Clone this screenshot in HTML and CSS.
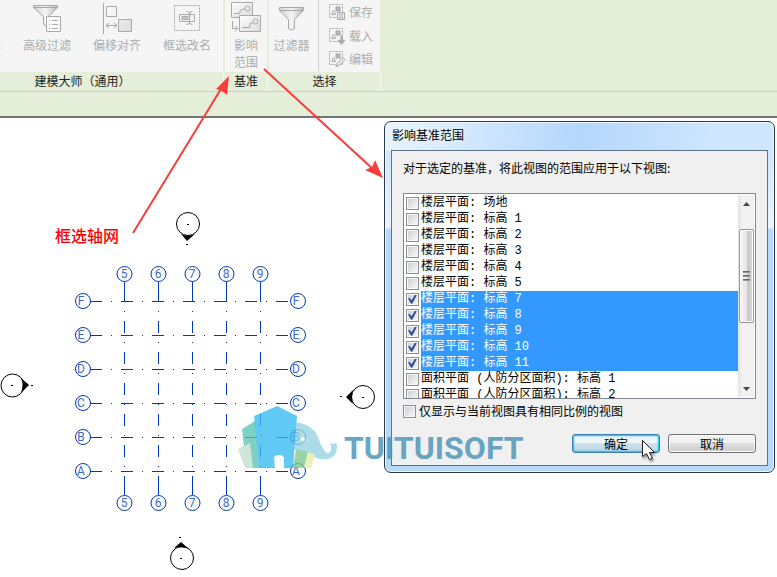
FILE: index.html
```html
<!DOCTYPE html>
<html lang="zh-CN">
<head>
<meta charset="utf-8">
<title>影响基准范围</title>
<link rel="stylesheet" href="styles.css">
</head>
<body>
<svg class="defs" aria-hidden="true">
  <defs>
    <linearGradient id="metal" x1="0" x2="1"><stop offset="0" stop-color="#d2d2d2"/><stop offset=".5" stop-color="#f4f4f4"/><stop offset="1" stop-color="#bfbfbf"/></linearGradient>
    <linearGradient id="sheet" x1="0" y1="0" x2="1" y2="1"><stop offset="0" stop-color="#fdfdfd"/><stop offset="1" stop-color="#dcdcdc"/></linearGradient>
    <g id="pick"><path d="M1.5 1.5h13v13h-13z" stroke-dasharray="2 1"/><path d="M3.5 11.500l2-4 2 4z"/><path d="M8.500 4.500h3v3h-3z" stroke-width="2"/></g>
  </defs>
</svg>
<header class="ribbon">
  <section class="panel panel-tools">
    <div class="tools">
      <button class="tool tool-cut">准</button>
      <button class="tool">
        <svg class="icon" viewBox="0 0 32 32"><path d="M2.500 3.500h24v2l-9 9v11l-5-3v-8l-10-9z" fill="url(#metal)"/><path d="M2.500 5.500h24"/><path d="M15.500 14.500h14v15h-14z" fill="#fcfcfc"/><path d="M21 18.500h6M21 22.500h6M21 26.500h6M18 18.500h1M18 22.500h1M18 26.500h1"/></svg>
        <span>高级过滤</span>
      </button>
      <button class="tool">
        <svg class="icon" viewBox="0 0 32 32"><path d="M2.500 1v31M5 23.500h11M8 21l-3 2.500 3 2.500M13 21l3 2.500-3 2.500"/><path d="M5.500 4.500h10v10h-10zM17.500 17.500h13v12h-13z" fill="url(#sheet)"/></svg>
        <span>偏移对齐</span>
      </button>
      <button class="tool">
        <svg class="icon" viewBox="0 0 32 32"><path d="M3.500 3.500h25v25h-25z" stroke-dasharray="2 1"/><path d="M8.500 12.500h15v7h-15z" fill="#f2f2f2"/><path d="M11 14.500h6v3h-6z" fill="#c8c8c8"/><path d="M18.500 10v12M15.500 9.500q3 0 3 2 0-2 3-2M15.500 22.500q3 0 3-2 0 2 3 2"/></svg>
        <span>框选改名</span>
      </button>
    </div>
    <h2>建模大师（通用）</h2>
  </section>
  <section class="panel panel-datum">
    <div class="tools">
      <button class="tool">
        <svg class="icon" viewBox="0 0 32 32"><path d="M1.500.5h21v15h-21z" fill="url(#sheet)"/><path d="M4 11.500h6v-3l5-2"/><circle cx="17.500" cy="6.500" r="2.500"/><path d="M2.500 19v7.500h5M5 23.500l3 3-3 3"/><path d="M9.500 13.500h21v16h-21z" fill="url(#sheet)"/><path d="M12 25.500h8v-4l3-1"/><circle cx="25.500" cy="19.500" r="2.500"/></svg>
        <span>影响<br>范围</span>
      </button>
    </div>
    <h2>基准</h2>
  </section>
  <section class="panel panel-select">
    <div class="tools">
      <button class="tool">
        <svg class="icon" viewBox="0 0 32 32"><path d="M3.500 5.500h24v3l-9 9v9q-3 3-6 0v-9l-9-9z" fill="url(#metal)"/><path d="M3.500 8.500h24"/></svg>
        <span>过滤器</span>
      </button>
      <div class="stack">
        <button><svg viewBox="0 0 18 18"><use href="#pick"/><path d="M9.500 9.500h7v7h-7z" fill="#eee"/><path d="M11.500 10v2h3v-2M11.500 16v-2h3v2"/></svg>保存</button>
        <button><svg viewBox="0 0 18 18"><use href="#pick"/><path d="M13.500 8.500v8M10.500 13l3 3.500 3-3.500" stroke="#aaa" stroke-width="2"/></svg>载入</button>
        <button><svg viewBox="0 0 18 18"><use href="#pick"/><path d="M8 16.500l1-3 6-6 2 2-6 6z" fill="#eee"/></svg>编辑</button>
      </div>
    </div>
    <h2>选择</h2>
  </section>
</header>
<div class="options-bar"></div>

<svg class="drawing" width="777" height="577" viewBox="0 0 777 577" role="img" aria-label="轴网平面图">
  <g class="grid" shape-rendering="crispEdges">
    <path class="axis" d="M90 301.500H290M90 335.500H290M90 369.500H290M90 403.500H290M90 437.500H290M90 471.500H290"/>
    <path class="axis" d="M124.500 290V488M158.500 290V488M192.500 290V488M226.500 290V488M260.500 290V488"/>
    <path d="M124.500 282v8m0 198v7M158.500 282v8m0 198v7M192.500 282v8m0 198v7M226.500 282v8m0 198v7M260.500 282v8m0 198v7"/>
  </g>
  <g class="grid">
    <g id="heads"><circle cx="124.500" cy="274" r="7.500"/><circle cx="158.500" cy="274" r="7.500"/><circle cx="192.500" cy="274" r="7.500"/><circle cx="226.500" cy="274" r="7.500"/><circle cx="260.500" cy="274" r="7.500"/></g>
    <use href="#heads" y="229"/>
    <g id="sides"><circle cx="83" cy="301" r="7.500"/><circle cx="83" cy="335" r="7.500"/><circle cx="83" cy="369" r="7.500"/><circle cx="83" cy="403" r="7.500"/><circle cx="83" cy="437" r="7.500"/><circle cx="83" cy="471" r="7.500"/></g>
    <use href="#sides" x="215"/>
  </g>
  <g class="axis-name">
    <text x="124" y="278">5</text><text x="158" y="278">6</text><text x="192" y="278">7</text><text x="226" y="278">8</text><text x="260" y="278">9</text>
    <text x="124" y="507">5</text><text x="158" y="507">6</text><text x="192" y="507">7</text><text x="226" y="507">8</text><text x="260" y="507">9</text>
    <text x="81" y="305">F</text><text x="81" y="339">E</text><text x="81" y="373">D</text><text x="81" y="407">C</text><text x="81" y="441">B</text><text x="81" y="475">A</text>
    <text x="296" y="305">F</text><text x="296" y="339">E</text><text x="296" y="373">D</text><text x="296" y="407">C</text><text x="296" y="441">B</text><text x="296" y="475">A</text>
  </g>
  <g class="marker">
    <circle cx="188" cy="224" r="11.500"/><path d="M187 224.500h2M186 244.500h2"/><path class="solid" d="M181 234q7 3 14 0l-8 7z"/>
    <circle cx="12.500" cy="385.500" r="11.500"/><path d="M11 385.500h2M31 385.500h2"/><path class="solid" d="M21 378l8 7-8 8q3-8 0-15z"/>
    <circle cx="363" cy="397" r="11.500"/><path d="M362 397.500h2M340 396.500h2"/><path class="solid" d="M353 390l-7 7 7 7q-2-7 0-14z"/>
    <circle cx="182" cy="558" r="11.500"/><path d="M180 558.500h2M179 537.500h2"/><path class="solid" d="M174 548l7-6 8 7q-7-3-15-1z"/>
  </g>
  <g class="arrow">
    <path d="M133 233L224 84M264 69L374 170"/>
    <path class="head" d="M229 76l-2 19-5-4-6-2zM383 178l-18-8 7-3 3-7z"/>
  </g>
  <text class="note" x="55" y="242">框选轴网</text>
</svg>

<section class="dialog" role="dialog" aria-labelledby="dialog-title">
  <h1 id="dialog-title">影响基准范围</h1>
  <form class="dialog-body">
    <p>对于选定的基准，将此视图的范围应用于以下视图:</p>
    <div class="list-box">
      <ul>
        <li><input type="checkbox" id="v0"><label for="v0">楼层平面: 场地</label></li>
        <li><input type="checkbox" id="v1"><label for="v1">楼层平面: 标高 1</label></li>
        <li><input type="checkbox" id="v2"><label for="v2">楼层平面: 标高 2</label></li>
        <li><input type="checkbox" id="v3"><label for="v3">楼层平面: 标高 3</label></li>
        <li><input type="checkbox" id="v4"><label for="v4">楼层平面: 标高 4</label></li>
        <li><input type="checkbox" id="v5"><label for="v5">楼层平面: 标高 5</label></li>
        <li class="selected"><input type="checkbox" id="v7" checked><label for="v7">楼层平面: 标高 7</label></li>
        <li class="selected"><input type="checkbox" id="v8" checked><label for="v8">楼层平面: 标高 8</label></li>
        <li class="selected"><input type="checkbox" id="v9" checked><label for="v9">楼层平面: 标高 9</label></li>
        <li class="selected"><input type="checkbox" id="v10" checked><label for="v10">楼层平面: 标高 10</label></li>
        <li class="selected current"><input type="checkbox" id="v11" checked><label for="v11">楼层平面: 标高 11</label></li>
        <li><input type="checkbox" id="a1"><label for="a1">面积平面 (人防分区面积): 标高 1</label></li>
        <li><input type="checkbox" id="a2"><label for="a2">面积平面 (人防分区面积): 标高 2</label></li>
      </ul>
      <div class="scrollbar" aria-hidden="true">
        <svg viewBox="0 0 7 4"><path d="M0 4l3.500-4L7 4z"/></svg>
        <div class="track"><div class="thumb"><i></i><i></i><i></i></div></div>
        <svg viewBox="0 0 7 4"><path d="M0 0l3.500 4L7 0z"/></svg>
      </div>
    </div>
    <div class="scale-only"><input type="checkbox" id="same"><label for="same">仅显示与当前视图具有相同比例的视图</label></div>
    <div class="actions"><button type="button" class="default">确定</button><button type="button">取消</button></div>
  </form>
</section>

<svg class="overlay" width="777" height="577" viewBox="0 0 777 577" aria-hidden="true">
  <g opacity=".78">
    <path fill="#bfe0cc" d="M238 449l15-9 5 28h-13z"/>
    <path fill="#58c4b4" d="M242 429l15-9 14 2 4 46h-22l-3-25-6 3z"/>
    <path fill="#45b3bd" d="M254 421l14 0 4 47h-12z"/>
    <path fill="#94d3e2" d="M285 422q12-1 21 3 9 4 12 12 4 12 9 16 5 1 4-8l-2-2 4 1 3-1 1 3q0 9-6 12-11 4-22-4l-11-4-13-1z"/>
    <path fill="#7bc98c" d="M296 449l12 3-4 16h-11z"/>
    <path fill="#e5eda4" d="M308 452l7 3-4 13h-7z"/>
    <path fill="#36baf0" d="M254 416l23-10 20 10-4 52h-9v-10q-1-3-5-3t-6 3v10h-14z"/>
    <circle cx="303" cy="439" r="2" fill="#fff"/>
  </g>
  <text class="brand" x="344" y="459">TUITUISOFT</text>
  <path class="pointer" d="M642.500 440.500v16l4-3 3 6 3-1-3-6h5z"/>
</svg>
</body>
</html>
```

FILE: styles.css
```css
* { box-sizing: border-box; }

body {
  position: relative;
  min-height: 100vh;
  margin: 0;
  overflow: hidden;
  background: #fff;
  color: #000;
  font: 12px/16px "Noto Sans CJK SC", sans-serif;
}

h1, h2, p, ul { margin: 0; padding: 0; font-size: 12px; font-weight: 400; }
button { font: inherit; color: inherit; }
.defs { position: absolute; width: 0; height: 0; }

/* Ribbon */
.ribbon {
  display: flex;
  gap: 2px;
  background: #e5eed8;
  border-bottom: 1px solid #cbd2c2;
}
.panel { background: #f5f5f5; }
.panel-tools { margin-left: -58px; width: 281px; }
.panel-datum { width: 42px; }
.panel-select { width: 111px; }
.panel h2 {
  height: 19px;
  line-height: 17px;
  background: #e5eed8;
  color: #222;
  text-align: center;
  box-shadow: 1px 0 #f2f6ec;
}
.tools { display: flex; height: 72px; color: #adadad; }
.tools button { padding: 0; border: 0; background: none; }
.tools svg { fill: none; stroke: #a9a9a9; }
.tool {
  display: flex;
  flex-direction: column;
  align-items: center;
  gap: 2px;
  width: 70px;
  line-height: 17px;
}
.tools .tool { padding-top: 2px; }
.tools .tool-cut { align-items: flex-end; justify-content: flex-start; padding: 36px 11px 0 0; }
.icon { flex: none; width: 32px; height: 32px; }
.panel-datum .tool { width: 42px; }
.panel-select .tool { width: 45px; }
.stack {
  display: flex;
  flex-direction: column;
  height: 71px;
  margin-left: 4px;
  padding-left: 9px;
  border-left: 1px solid #cfcfcf;
}
.stack button { display: flex; align-items: center; gap: 3px; height: 24px; line-height: 14px; }
.stack svg { width: 18px; height: 18px; }
.options-bar { height: 26px; background: #e5eed8; border-bottom: 2px solid #737373; }

/* Plan drawing */
.drawing, .overlay { position: absolute; top: 0; left: 0; pointer-events: none; }
.grid { fill: none; stroke: #0038b8; }
.axis { stroke-dasharray: 12 9 1 9; }
.axis-name { fill: #4169cd; font: 12px "Liberation Sans Narrow", Roboto, sans-serif; text-anchor: middle; }
.marker { fill: none; stroke: #000; }
.marker .solid { fill: #000; stroke: none; }
.arrow { fill: none; stroke: #fb3c3c; stroke-width: 2; }
.arrow .head { fill: #fb3c3c; stroke: none; }
.note { fill: #f00; font: 500 16px "Noto Sans CJK SC", sans-serif; }

/* Dialog */
.dialog {
  position: absolute;
  top: 121px;
  left: 384px;
  right: 2px;
  padding: 0 6px 6px;
  border: 1px solid #2a3848;
  border-radius: 7px;
  box-shadow: inset 0 0 0 1px #f0f8ff;
  background: linear-gradient(100deg, #e9f4ff, #b4d7fc 50%, #cfe6ff 85%) top / 100% 29px no-repeat,
    linear-gradient(#d0e6fd 29px, #eaf4ff 106px, #b5d8fb 107px);
}
.dialog h1 { height: 28px; line-height: 26px; padding-left: 1px; text-shadow: 0 0 6px #fff; }
.dialog-body { padding: 8px 11px 12px; border: 1px solid #60728a; background: #f0f0f0; }
.dialog-body p { height: 34px; line-height: 18px; }
.list-box {
  display: flex;
  height: 206px;
  padding: 1px;
  border: 1px solid #828790;
  background: #fff;
  overflow: hidden;
}
.list-box ul { flex: 1; list-style: none; }
.list-box li { display: flex; align-items: center; gap: 2px; height: 16px; padding-left: 1px; }
.list-box label { flex: 1; line-height: 16px; font-family: "Liberation Mono", "Noto Sans CJK SC", monospace; }
.selected label { background: #3399ff; color: #fff; }
.current label { outline: 1px dotted #d07020; outline-offset: -1px; }

input[type="checkbox"] {
  appearance: none;
  flex: none;
  width: 13px;
  height: 13px;
  margin: 0;
  border: 1px solid #8e8f8f;
  background: linear-gradient(135deg, #ccd0d6, #f6f6f6) content-box, #f6f6f6;
  padding: 1px;
}
input[type="checkbox"]:checked::before {
  content: "";
  display: block;
  width: 9px;
  height: 9px;
  background: #354c96;
  clip-path: polygon(0 45%, 20% 40%, 40% 65%, 78% 0, 100% 0, 50% 100%, 32% 100%);
}

.scrollbar {
  display: flex;
  flex-direction: column;
  align-items: center;
  justify-content: space-between;
  width: 16px;
  padding: 7px 0 6px;
  background: linear-gradient(90deg, #e3e3e3, #f3f3f3 30%, #f0f0f0);
}
.scrollbar svg { width: 7px; height: 4px; fill: #444; }
.track { flex: 1; width: 15px; padding-top: 23px; }
.thumb {
  display: flex;
  flex-direction: column;
  align-items: center;
  justify-content: center;
  gap: 2px;
  width: 15px;
  height: 94px;
  border: 1px solid #979797;
  border-radius: 2px;
  box-shadow: inset 0 0 0 1px #fff;
  background: linear-gradient(90deg, #f5f5f5, #e6e6e6 50%, #c6c6c8 60%, #dcdcdc);
}
.thumb i { width: 7px; height: 2px; background: linear-gradient(#555, #aaa); }

.scale-only { display: flex; align-items: center; gap: 3px; height: 24px; margin-bottom: 11px; }
.actions { display: flex; justify-content: flex-end; gap: 8px; }
.actions button {
  width: 88px;
  height: 19px;
  padding: 0;
  border: 1px solid #707070;
  border-radius: 3px;
  line-height: 16px;
  background: linear-gradient(#f2f2f2 45%, #dddddd 50%, #cfcfcf);
  box-shadow: inset 0 0 0 1px #fcfcfc;
}
.actions .default {
  border-color: #3c7fb1;
  background: linear-gradient(#eef6fa 45%, #cfe2ec 50%, #bcd5e2);
  box-shadow: inset 0 0 0 1px #35c8f5, inset 0 0 2px 1px #35c8f5;
}

/* Watermark and mouse pointer */
.brand { fill: #4f96b8; fill-opacity: .85; font: 700 32px Roboto, sans-serif; }
.pointer { fill: #fff; stroke: #222; filter: drop-shadow(1px 2px 1px #0006); }
```
